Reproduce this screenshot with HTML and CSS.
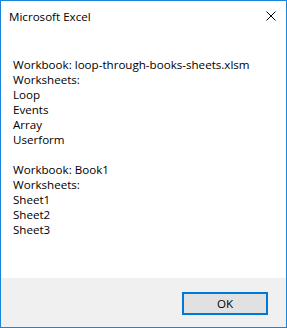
FILE: index.html
```html
<!DOCTYPE html>
<html lang="en">
<head>
    <meta charset="UTF-8">
    <title>Microsoft Excel</title>
    <link rel="stylesheet" href="styles.css">
</head>
<body>
    <div class="dialog">
        <div class="titlebar">
            <span class="title">Microsoft Excel</span>
            <svg class="close" width="10" height="10" viewBox="0 0 10 10">
                <path d="M0.5 0.5 L9.5 9.5 M9.5 0.5 L0.5 9.5" stroke="#000" stroke-width="1"/>
            </svg>
        </div>
        <div class="message">
            <div>Workbook: loop-through-books-sheets.xlsm</div>
            <div>Worksheets:</div>
            <div>Loop</div>
            <div>Events</div>
            <div>Array</div>
            <div>Userform</div>
            <div>&nbsp;</div>
            <div>Workbook: Book1</div>
            <div>Worksheets:</div>
            <div>Sheet1</div>
            <div>Sheet2</div>
            <div>Sheet3</div>
        </div>
        <div class="footer">
            <button class="ok">OK</button>
        </div>
    </div>
</body>
</html>
```

FILE: styles.css
```css
body {
    margin: 0;
    font-family: "Open Sans", "Noto Sans", sans-serif;
    font-size: 11.6px;
    color: #000;
    background: #fff;
}
.dialog {
    width: 287px;
    height: 328px;
    box-sizing: border-box;
    border: 1px solid #1a84d8;
    display: flex;
    flex-direction: column;
    background: #fff;
}
.titlebar {
    height: 30px;
    display: flex;
    align-items: center;
    justify-content: space-between;
    padding: 0 10px 0 8px;
}
.title {
    line-height: 15px;
}
.close {
    display: block;
}
.message {
    flex: 1;
    padding: 26px 0 0 12px;
    line-height: 15px;
}
.footer {
    height: 49px;
    background: #f0f0f0;
    display: flex;
    justify-content: flex-end;
    align-items: center;
    padding-right: 18px;
}
.ok {
    width: 86px;
    height: 23px;
    box-sizing: border-box;
    border: 2px solid #0078d7;
    background: #e1e1e1;
    font-family: inherit;
    font-size: 11.6px;
    color: #000;
    padding: 0;
    margin-top: 2px;
}
```
